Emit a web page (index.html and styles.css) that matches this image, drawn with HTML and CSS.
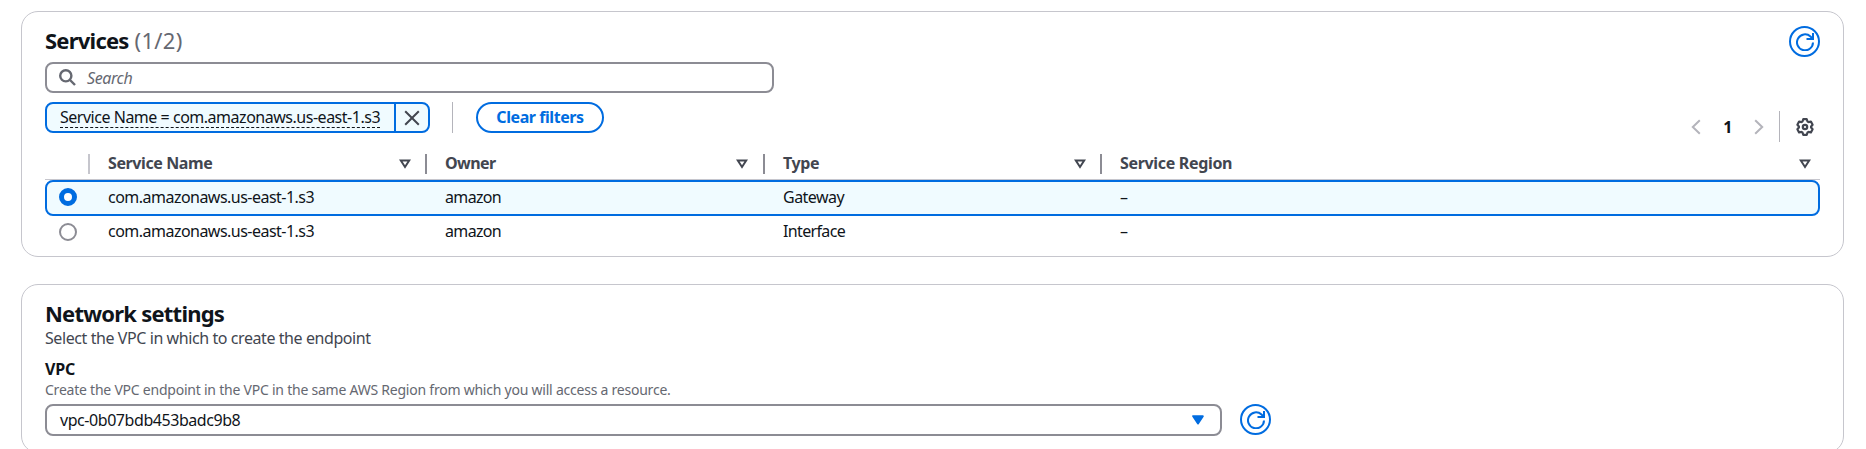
FILE: index.html
```html
<!DOCTYPE html>
<html lang="en">
<head>
<meta charset="utf-8">
<title>Create endpoint</title>
<link rel="stylesheet" href="styles.css">
</head>
<body>
<svg width="0" height="0" class="defs">
  <symbol id="refresh" viewBox="0 0 18 18"><path d="M17 9.500A8 8 0 1 1 14.500 3.500L16.500 5.500M17 0v6h-6.500"/></symbol>
  <symbol id="sort" viewBox="0 0 12 10"><path d="M1.800 1.500h8.400L6 8z"/></symbol>
</svg>
<main class="page">
  <section class="card services">
    <header class="card-head">
      <h2 class="title">Services <span class="count">(1/2)</span></h2>
      <button class="round" aria-label="Refresh"><svg class="refresh"><use href="#refresh"/></svg></button>
    </header>
    <div class="tools">
      <div class="filtering">
        <div class="search">
          <svg class="magnifier" viewBox="0 0 17 17"><circle cx="6.800" cy="6.800" r="5.600"/><path d="M11 11l5 5"/></svg>
          <span class="placeholder">Search</span>
        </div>
        <div class="filters">
          <div class="token">
            <span class="token-body"><span class="token-text">Service Name = com.amazonaws.us-east-1.s3</span></span>
            <span class="token-x"><svg class="cross" viewBox="0 0 16 16"><path d="M1.200 1.200l13.600 13.600M14.800 1.200L1.200 14.800"/></svg></span>
          </div>
          <span class="rule filter-rule"></span>
          <button class="clear">Clear filters</button>
        </div>
      </div>
      <div class="pager">
        <svg class="chevron" viewBox="0 0 10 16"><path d="M8.800 1.200L1.800 8l7 6.800"/></svg>
        <span class="page-number">1</span>
        <svg class="chevron" viewBox="0 0 10 16"><path d="M1.200 1.200L8.200 8l-7 6.800"/></svg>
        <span class="rule pager-rule"></span>
        <svg class="gear" viewBox="0 0 18 18"><path d="M7.300 1.200h3.400l.8 2.300 1.100.6 2.300-.6 1.700 3.200-1.500 1.700v1.200l1.500 1.700-1.700 3.200-2.300-.6-1.100.6-.8 2.300H7.300l-.8-2.300-1.100-.6-2.300.6-1.700-3.200 1.500-1.700V8.400L1.400 6.700l1.700-3.200 2.300.6 1.100-.6z"/><circle cx="9" cy="9" r="2.200"/></svg>
      </div>
    </div>
    <div class="table">
      <div class="row head">
        <span class="pick"></span>
        <span class="cell"><span class="name">Service Name</span><svg class="sort"><use href="#sort"/></svg></span>
        <span class="cell owner"><span class="name">Owner</span><svg class="sort"><use href="#sort"/></svg></span>
        <span class="cell"><span class="name">Type</span><svg class="sort"><use href="#sort"/></svg></span>
        <span class="cell region"><span class="name">Service Region</span><svg class="sort"><use href="#sort"/></svg></span>
      </div>
      <div class="row selected">
        <span class="pick"><i class="radio on"></i></span>
        <span class="cell">com.amazonaws.us-east-1.s3</span>
        <span class="cell word">amazon</span>
        <span class="cell">Gateway</span>
        <span class="cell">–</span>
      </div>
      <div class="row">
        <span class="pick"><i class="radio"></i></span>
        <span class="cell">com.amazonaws.us-east-1.s3</span>
        <span class="cell word">amazon</span>
        <span class="cell word">Interface</span>
        <span class="cell">–</span>
      </div>
    </div>
  </section>
  <section class="card network">
    <h2 class="title">Network settings</h2>
    <p class="subtitle">Select the VPC in which to create the endpoint</p>
    <div class="label">VPC</div>
    <p class="hint">Create the VPC endpoint in the VPC in the same AWS Region from which you will access a resource.</p>
    <div class="control">
      <div class="select"><span class="value">vpc-0b07bdb453badc9b8</span><svg class="caret" viewBox="0 0 12 10"><path d="M1.200 1.200h9.600L6 8.500z"/></svg></div>
      <button class="round" aria-label="Refresh VPCs"><svg class="refresh"><use href="#refresh"/></svg></button>
    </div>
  </section>
</main>
</body>
</html>
```
FILE: styles.css
```css
* { box-sizing: border-box; }
body {
  margin: 0;
  height: 449px;
  overflow: hidden;
  background: #fff;
  color: #0f141a;
  font: 16px/20px "Noto Sans", "Open Sans", sans-serif;
  letter-spacing: -0.52px;
}
h2, p { margin: 0; }
svg { display: block; flex: none; fill: none; stroke: currentColor; stroke-width: 2; }
button { font: inherit; letter-spacing: inherit; padding: 0; background: #fff; color: #006ce0; border: 2px solid #006ce0; }
.defs { position: absolute; }
.page { display: flex; flex-direction: column; gap: 27px; padding: 11px 22px 0 21px; }
.card { border: 1px solid #c6c6cd; border-radius: 17px; padding: 14px 23px 0; }
.services { height: 246px; }
.network { height: 169px; }

.card-head { display: flex; justify-content: space-between; height: 31px; }
.title { font-size: 22px; line-height: 29px; font-weight: 700; letter-spacing: -0.77px; }
.count { font-weight: 400; color: #656871; letter-spacing: 0.3px; margin-left: 1px; }
.round { display: grid; place-items: center; width: 31px; height: 31px; border-radius: 50%; }
.refresh { width: 18px; height: 18px; }

.tools { display: flex; justify-content: space-between; align-items: flex-end; margin-top: 5px; height: 80px; }
.filtering { align-self: flex-start; }
.search { display: flex; align-items: center; width: 729px; height: 31px; padding-left: 12px; border: 2px solid #8c8c94; border-radius: 8px; color: #656871; }
.magnifier { width: 17px; height: 17px; stroke-width: 2.4; }
.placeholder { margin-left: 11px; font-style: italic; letter-spacing: -0.4px; font-size: 16px; }
.filters { display: flex; margin-top: 9px; }
.token { display: flex; width: 385px; height: 31px; border: 2px solid #006ce0; border-radius: 8px; background: #f0fbff; }
.token-body { flex: 1; padding: 2px 0 0 13px; border-right: 2px solid #006ce0; }
.token-text { display: block; width: 320px; height: 22px; line-height: 22px; white-space: nowrap; letter-spacing: -0.48px; border-bottom: 1px dashed #0f141a; }
.token-x { display: grid; place-items: center; width: 32px; color: #424650; }
.cross { width: 16px; height: 16px; }
.rule { width: 1px; height: 31px; background: #b4b4bb; }
.filter-rule { margin: 0 23px 0 22px; }
.clear { width: 128px; height: 31px; padding-bottom: 1px; border-radius: 16px; font-weight: 700; letter-spacing: -0.43px; }
.pager { display: flex; align-items: center; height: 31px; color: #b4b4bb; }
.chevron { width: 10px; height: 16px; }
.page-number { width: 53px; text-align: center; font-weight: 700; color: #0f141a; }
.pager-rule { margin: 0 16px 0 15px; }
.gear { width: 18px; height: 18px; margin-right: 6px; color: #424650; stroke-width: 2.2; stroke-linejoin: round; }

.row { display: grid; grid-template-columns: 45px 337px 338px 337px 1fr; height: 31px; align-items: center; }
.cell { padding: 0 0 2px 18px; }
.word { letter-spacing: -0.65px; }
.pick { padding-left: 14px; }
.head { height: 38px; padding-top: 6px; border-bottom: 1px solid #c6c6cd; font-weight: 700; color: #424650; letter-spacing: -0.4px; }
.head .cell { display: flex; align-items: center; justify-content: space-between; height: 20px; padding: 0 14px 0 18px; border-right: 2px solid #8c8c94; }
.name { padding-bottom: 1px; }
.head .owner { letter-spacing: -0.55px; padding-right: 15px; }
.head .region { border-right: 0; padding-right: 9px; letter-spacing: -0.33px; }
.head .pick { height: 20px; border-right: 2px solid #c6c6cd; }
.sort { width: 12px; height: 10px; }
.selected { height: 36px; border: 2px solid #006ce0; border-radius: 8px; background: #f0fbff; grid-template-columns: 43px 337px 338px 337px 1fr; }
.selected .pick { padding: 0 0 2px 12px; }
.radio { display: block; width: 18px; height: 18px; border: 2px solid #8c8c94; border-radius: 50%; background: #fff; }
.radio.on { border: 5px solid #006ce0; }

.subtitle { margin-top: 1px; line-height: 18px; color: #424650; letter-spacing: -0.42px; }
.label { margin-top: 12px; font-weight: 700; letter-spacing: -0.2px; }
.hint { margin-top: 1px; font-size: 14px; color: #656871; letter-spacing: -0.23px; }
.control { display: flex; gap: 18px; margin-top: 4px; }
.select { display: flex; align-items: center; justify-content: space-between; width: 1177px; height: 32px; padding: 0 16px 1px 13px; border: 2px solid #8c8c94; border-radius: 8px; }
.value { letter-spacing: -0.44px; }
.caret { width: 12px; height: 10px; color: #006ce0; fill: currentColor; stroke-linejoin: round; }
```
